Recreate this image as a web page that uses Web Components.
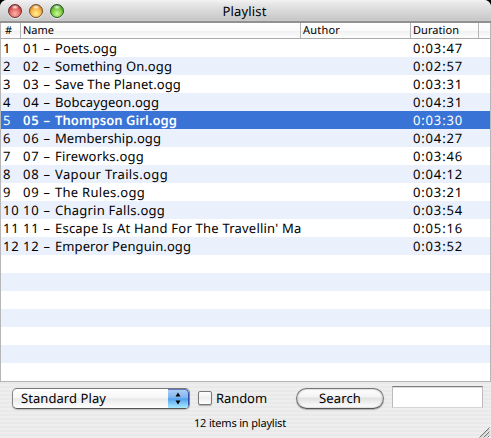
<!DOCTYPE html>
<html lang="en">
<head>
<meta charset="utf-8">
<title>Playlist</title>
<style>
html,body{margin:0;height:100%;overflow:hidden;background:#000}
body{font:13px/18px "Noto Sans","Open Sans",sans-serif;color:#000;text-rendering:geometricPrecision}
</style>
</head>
<body>
<playlist-window></playlist-window>
<script>
/* Single line of text tracked to a given width */
class FitText extends HTMLElement{
  connectedCallback(){
    const r=this.attachShadow({mode:'open'});
    r.innerHTML=`<style>:host{display:inline-block;white-space:pre}span{display:inline-block}</style><span><slot></slot></span>`;
    const s=r.querySelector('span'),w=+this.getAttribute('w');
    const n=this.textContent.length;
    if(w) s.style.letterSpacing=((w-s.getBoundingClientRect().width)/n)+'px';
  }
}
customElements.define('fit-text',FitText);

class TrafficLight extends HTMLElement{
  connectedCallback(){
    this.attachShadow({mode:'open'}).innerHTML=`<style>
    :host{display:block;width:14px;height:14px}
    div{box-sizing:border-box;width:14px;height:14px;border-radius:50%;overflow:hidden;
      background:radial-gradient(ellipse 4px 2.5px at 50% 17%,#fffe,#fff0),
      radial-gradient(circle at 50% 72%,var(--hi) 0,var(--mid) 50%,var(--low) 80%,var(--edge) 100%);
      border:1px solid var(--edge);box-shadow:0 1px 0 #fff9}
    </style><div></div>`;
  }
}
customElements.define('traffic-light',TrafficLight);

class TitleBar extends HTMLElement{
  connectedCallback(){
    this.attachShadow({mode:'open'}).innerHTML=`<style>
    :host{display:grid;grid-template-columns:1fr auto 1fr;height:23px;box-sizing:border-box;
      background:linear-gradient(#f3f3f3 0,#e6e6e6 20%,#c9c9c9 90%);border-bottom:2px solid #919191}
    .l{display:flex;gap:7px;padding:4px 0 0 8px}
    .t{line-height:22px;padding-right:2px}
    .r{--hi:#ffb4ac;--mid:#e06560;--low:#b02d2d;--edge:#6b3030}
    .y{--hi:#fff29a;--mid:#f7b444;--low:#c87a22;--edge:#735027}
    .g{--hi:#cdfc96;--mid:#79c840;--low:#3b8e1f;--edge:#2d5524}
    </style><div class="l"><traffic-light class="r"></traffic-light><traffic-light class="y"></traffic-light><traffic-light class="g"></traffic-light></div>
    <div class="t"><fit-text w="44">Playlist</fit-text></div><div></div>`;
  }
}
customElements.define('title-bar',TitleBar);

class PlaylistRow extends HTMLElement{
  connectedCallback(){
    const a=k=>this.getAttribute(k);
    this.attachShadow({mode:'open'}).innerHTML=`<style>
    :host{display:grid;grid-template-columns:20px 281px 109px 1fr;height:18px;line-height:18px;white-space:pre}
    :host(:nth-of-type(even)){background:#eaf1fd}
    :host([selected]){background:#3973d6;color:#fff}
    :host([selected]) .n{font-weight:600}
    div{overflow:hidden;padding-left:2px;height:18px}
    </style>`+(a('n')?`<div><fit-text w="${a('n').length*8.2}">${a('n')}</fit-text></div><div class="n"><fit-text w="32">${a('name').slice(0,5)}</fit-text><fit-text w="${a('w')-32}">${a('name').slice(5)}</fit-text></div><div></div><div><fit-text w="50">${a('time')}</fit-text></div>`:'');
  }
}
customElements.define('playlist-row',PlaylistRow);

class PlaylistTable extends HTMLElement{
  connectedCallback(){
    const rows=[['01 – Poets.ogg','0:03:47',94],['02 – Something On.ogg','0:02:57',149],['03 – Save The Planet.ogg','0:03:31',158],['04 – Bobcaygeon.ogg','0:04:31',136],['05 – Thompson Girl.ogg','0:03:30',154],['06 – Membership.ogg','0:04:27',138],['07 – Fireworks.ogg','0:03:46',121],['08 – Vapour Trails.ogg','0:04:12',145],['09 – The Rules.ogg','0:03:21',122],['10 – Chagrin Falls.ogg','0:03:54',142],["11 – Escape Is At Hand For The Travellin' Ma",'0:05:16',278.5],['12 – Emperor Penguin.ogg','0:03:52',168]];
    let h='';
    for(let i=0;i<19;i++){const r=rows[i];h+=r?`<playlist-row n="${i+1}" name="${r[0]}" time="${r[1]}" w="${r[2]}" ${i==4?'selected':''}></playlist-row>`:'<playlist-row></playlist-row>';}
    this.attachShadow({mode:'open'}).innerHTML=`<style>
    :host{display:block;height:359px;box-sizing:border-box;background:#fff;border:solid #b6b6b6;border-width:0 1px 1px}
    header{display:grid;grid-template-columns:20px 280px 110px 68px 1fr;height:16px;box-sizing:border-box;border-bottom:1px solid #aaa;
      background:linear-gradient(#fff 0,#fafafa 50%,#f0f0f0 51%,#fdfdfd);font-size:11px;line-height:16px}
    header div{height:15px;box-sizing:border-box;border-right:1px solid #b5b5b5;padding-left:2px}
    header div:first-child{padding-left:4px}
    header div:last-child{border:0}
    </style><header><div><fit-text w="7">#</fit-text></div><div><fit-text w="31">Name</fit-text></div><div><fit-text w="37">Author</fit-text></div><div><fit-text w="46">Duration</fit-text></div><div></div></header>${h}`;
  }
}
customElements.define('playlist-table',PlaylistTable);

class PopupButton extends HTMLElement{
  connectedCallback(){
    this.attachShadow({mode:'open'}).innerHTML=`<style>
    :host{display:flex;box-sizing:border-box;width:178px;height:21px;border:1px solid #858585;border-top-color:#777;border-bottom-color:#555;border-radius:5px;overflow:hidden;
      background:linear-gradient(#fff 0,#f6f6f6 45%,#e9e9e9 52%,#fff);box-shadow:0 1px 1px #0003}
    .t{flex:1;padding-left:8px;line-height:19px}
    svg{display:block}
    </style><div class="t"><slot></slot></div>
    <svg width="21" height="19" viewBox="0 0 21 19"><defs><linearGradient id="g" x2="0" y2="1"><stop offset="0" stop-color="#b4d1f4"/><stop offset=".45" stop-color="#80b5f1"/><stop offset=".52" stop-color="#55a2ee"/><stop offset="1" stop-color="#a9eaff"/></linearGradient></defs>
    <path fill="url(#g)" d="M0 0h21v19H0z"/><path d="M0 .2h17q3.500 .5 3.500 4V19" fill="none" stroke="#19288c" stroke-opacity=".75"/><path d="M7.500 7.500 10 3.500l2.500 4zM7.500 11.500 10 15.500l2.500-4z"/></svg>`;
  }
}
customElements.define('popup-button',PopupButton);

class CheckBox extends HTMLElement{
  connectedCallback(){
    this.attachShadow({mode:'open'}).innerHTML=`<style>
    :host{display:flex;gap:4px;height:21px;line-height:20px}
    i{box-sizing:border-box;width:14px;height:14px;margin-top:3px;border:1px solid #777;border-radius:2px;background:linear-gradient(#fff,#eee 50%,#fff);box-shadow:0 1px 1px #0004}
    </style><i></i><slot></slot>`;
  }
}
customElements.define('check-box',CheckBox);

class PushButton extends HTMLElement{
  connectedCallback(){
    this.attachShadow({mode:'open'}).innerHTML=`<style>
    :host{display:block;box-sizing:border-box;width:88px;height:21px;border:1px solid #747474;border-bottom-color:#555;border-radius:11px;text-align:center;line-height:18px;
      background:linear-gradient(#fff 0,#f3f3f3 40%,#e2e2e2 50%,#fff);box-shadow:0 1px 1px #0004,inset 0 0 2px #999}
    </style><slot></slot>`;
  }
}
customElements.define('push-button',PushButton);

class SearchField extends HTMLElement{
  connectedCallback(){
    this.attachShadow({mode:'open'}).innerHTML=`<style>
    :host{display:block;box-sizing:border-box;width:91px;height:22px;background:#fff;border:1px solid #bbb;border-top-color:#7c7c7c;border-bottom-color:#d5d5d5;box-shadow:inset 0 1px 0 #ddd}
    </style>`;
  }
}
customElements.define('search-field',SearchField);

class PlaylistWindow extends HTMLElement{
  connectedCallback(){
    this.attachShadow({mode:'open'}).innerHTML=`<style>
    :host{display:flex;flex-direction:column;position:relative;width:491px;height:438px;overflow:hidden;border-radius:7px 7px 0 0;background:repeating-linear-gradient(#eee 0 2px,#e9e9e9 2px 4px)}
    .c{display:flex;align-items:flex-start;padding:6px 0 0 12px;height:34px;box-sizing:border-box}
    search-field{margin:-2px 0 0 8px}
    check-box{margin-left:8px}push-button{margin-left:29px}
    .s{padding-right:11px;text-align:center;font-size:11px;line-height:16px}
    svg{position:absolute;right:0;bottom:0}
    </style><title-bar></title-bar><playlist-table></playlist-table>
    <div class="c"><popup-button><fit-text w="85">Standard Play</fit-text></popup-button><check-box><fit-text w="51">Random</fit-text></check-box><push-button><fit-text w="42">Search</fit-text></push-button><search-field></search-field></div>
    <div class="s"><fit-text w="92">12 items in playlist</fit-text></div>
    <svg width="13" height="12" viewBox="0 0 13 12"><path d="M1.500 11.500 11.500 1.500M5.500 11.500l6-6M9.500 11.500l2-2" stroke="#777"/><path d="M2.700 11.700 11.700 2.700M6.700 11.700l5-5" stroke="#bbb"/></svg>`;
  }
}
customElements.define('playlist-window',PlaylistWindow);
</script>
</body>
</html>
